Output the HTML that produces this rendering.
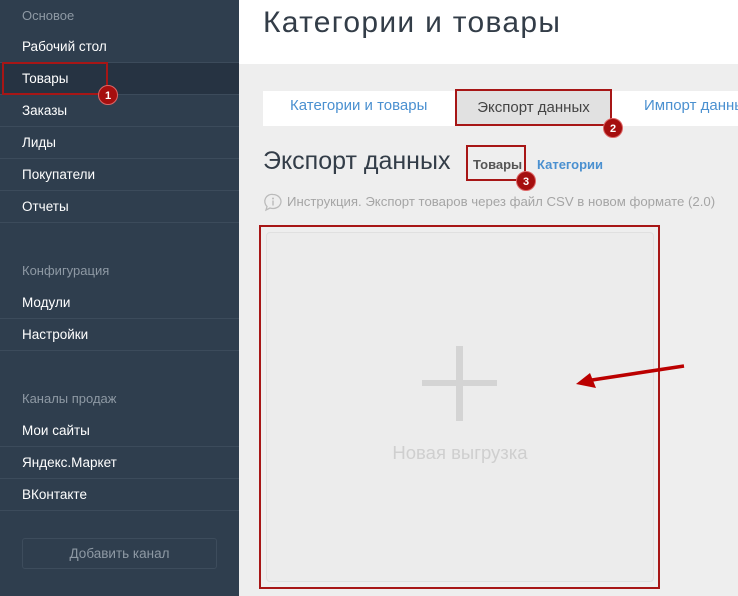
<!DOCTYPE html>
<html><head><meta charset="utf-8"><style>
*{margin:0;padding:0;box-sizing:border-box}
body{width:738px;height:596px;overflow:hidden;background:#eeeeee;font-family:"Liberation Sans","DejaVu Sans",sans-serif;position:relative}
.sb{position:absolute;left:0;top:0;width:239px;height:596px;background:#2f3e4e}
.sec{position:absolute;left:22px;font-size:13px;color:#8e99a4}
.it{position:absolute;left:0;width:239px;height:32px;border-bottom:1px solid #3c4b5b;color:#fff;font-size:13.5px;padding-left:22px;line-height:31px}
.sel{background:#263342}
.badge{position:absolute;width:20px;height:20px;border-radius:50%;background:#a50f0f;color:#fff;font-size:11px;font-weight:bold;text-align:center;line-height:20px;border:1px solid #d66}
.rb{position:absolute;border:2px solid #a71616}
.hdr{position:absolute;left:239px;top:0;width:499px;height:64px;background:#fff}
</style></head><body>
<div class="sb">
<div class="sec" style="top:8px">Основое</div>
<div class="it" style="top:31px">Рабочий стол</div>
<div class="it sel" style="top:63px">Товары</div>
<div class="it" style="top:95px">Заказы</div>
<div class="it" style="top:127px">Лиды</div>
<div class="it" style="top:159px">Покупатели</div>
<div class="it" style="top:191px">Отчеты</div>
<div class="sec" style="top:263px">Конфигурация</div>
<div class="it" style="top:287px">Модули</div>
<div class="it" style="top:319px">Настройки</div>
<div class="sec" style="top:391px">Каналы продаж</div>
<div class="it" style="top:415px">Мои сайты</div>
<div class="it" style="top:447px">Яндекс.Маркет</div>
<div class="it" style="top:479px">ВКонтакте</div>
<div style="position:absolute;left:22px;top:538px;width:195px;height:31px;border:1px solid #3d4c5c;border-radius:3px;color:#8e99a4;font-size:13.5px;text-align:center;line-height:29px">Добавить канал</div>
</div>
<div class="rb" style="left:2px;top:62px;width:106px;height:33px"></div>
<div class="badge" style="left:98px;top:85px">1</div>
<div class="hdr"><div style="position:absolute;left:24px;top:6px;font-size:30px;letter-spacing:1.3px;color:#333d48;white-space:nowrap">Категории и товары</div></div>
<div style="position:absolute;left:263px;top:91px;width:475px;height:35px;background:#fff"></div>
<div style="position:absolute;left:290px;top:97px;font-size:15px;color:#4a90d0">Категории и товары</div>
<div style="position:absolute;left:455px;top:89px;width:157px;height:37px;background:#e1e1e1;border:2px solid #a71616;font-size:15px;color:#444;text-align:center;line-height:33px">Экспорт данных</div>
<div style="position:absolute;left:644px;top:97px;font-size:15px;color:#4a90d0;white-space:nowrap">Импорт данных</div>
<div class="badge" style="left:603px;top:118px">2</div>
<div style="position:absolute;left:263px;top:147px;font-size:25px;color:#333d48">Экспорт данных</div>
<div style="position:absolute;left:473px;top:157px;font-size:13px;font-weight:bold;color:#555">Товары</div>
<div class="rb" style="left:466px;top:145px;width:60px;height:36px"></div>
<div class="badge" style="left:516px;top:171px">3</div>
<div style="position:absolute;left:537px;top:157px;font-size:13px;font-weight:bold;color:#4a90d0">Категории</div>
<svg style="position:absolute;left:263px;top:193px" width="20" height="19" viewBox="0 0 20 19"><path d="M10 1.5a8 7 0 1 1-3 13.5l-4 2 1-3.5A7 7 0 0 1 10 1.5z" fill="none" stroke="#bbb" stroke-width="1.3"/><circle cx="10" cy="5.5" r="1" fill="#bbb"/><rect x="9.3" y="7.5" width="1.4" height="5" fill="#bbb"/></svg>
<div style="position:absolute;left:287px;top:194px;font-size:13.2px;color:#a5a5a5;white-space:nowrap">Инструкция. Экспорт товаров через файл CSV в новом формате (2.0)</div>
<div class="rb" style="left:259px;top:225px;width:401px;height:364px"></div>
<div style="position:absolute;left:266px;top:232px;width:388px;height:350px;background:#ececec;border:1px solid #e0e0e0;border-radius:4px"></div>
<div style="position:absolute;left:422px;top:380px;width:75px;height:6px;background:#d4d4d4"></div>
<div style="position:absolute;left:456px;top:346px;width:7px;height:75px;background:#d4d4d4"></div>
<div style="position:absolute;left:266px;top:442px;width:388px;text-align:center;font-size:18.5px;color:#cfcfcf">Новая выгрузка</div>
<svg style="position:absolute;left:0;top:0" width="738" height="596"><path d="M684 366 L592 380" stroke="#b00" stroke-width="3.5"/><path d="M576 384 L590 373 L596 388 Z" fill="#b00"/></svg>
</body></html>
